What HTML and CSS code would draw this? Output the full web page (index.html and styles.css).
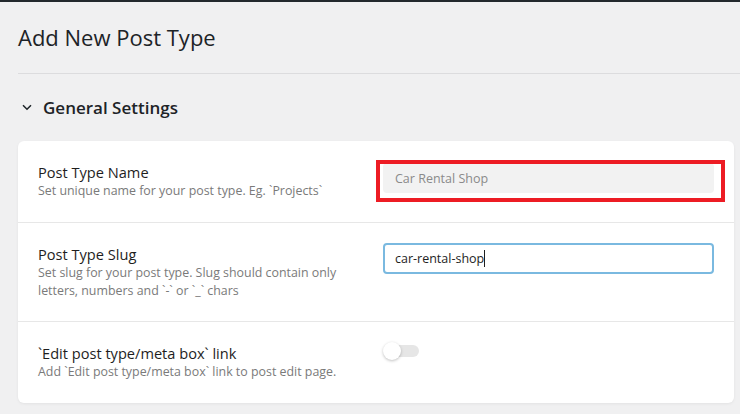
FILE: index.html
```html
<!DOCTYPE html>
<html>
<head>
<meta charset="utf-8">
<link rel="stylesheet" href="styles.css">
</head>
<body>
<div class="topbar"></div>
<main class="wrap">
  <h1 class="page-title">Add New Post Type</h1>
  <div class="section-head">
    <svg class="chev" width="10" height="7" viewBox="0 0 10 7"><polyline points="1,1.2 5,5.2 9,1.2" fill="none" stroke="#1d2327" stroke-width="1.5"/></svg>
    <span>General Settings</span>
  </div>
  <section class="card">
    <div class="row row-name">
      <div class="info">
        <div class="label">Post Type Name</div>
        <div class="desc">Set unique name for your post type. Eg. `Projects`</div>
      </div>
      <div class="control">
        <div class="input disabled">Car Rental Shop</div>
        <div class="highlight"></div>
      </div>
    </div>
    <div class="row row-slug">
      <div class="info">
        <div class="label">Post Type Slug</div>
        <div class="desc">Set slug for your post type. Slug should contain only letters, numbers and `-` or `_` chars</div>
      </div>
      <div class="control">
        <div class="input focused">car-rental-shop<span class="caret"></span></div>
      </div>
    </div>
    <div class="row row-link">
      <div class="info">
        <div class="label">`Edit post type/meta box` link</div>
        <div class="desc">Add `Edit post type/meta box` link to post edit page.</div>
      </div>
      <div class="control">
        <div class="toggle"><span class="track"></span><span class="knob"></span></div>
      </div>
    </div>
  </section>
</main>
</body>
</html>
```
FILE: styles.css
```css
* { box-sizing: border-box; }
html, body { margin: 0; padding: 0; }
body {
  background: #f0f0f1;
  font-family: "Open Sans", "Noto Sans", sans-serif;
  color: #1d2327;
  width: 740px;
  height: 414px;
  overflow: hidden;
}
.topbar { height: 2px; background: #23282d; }
.wrap { padding: 0 0 0 18px; }
.page-title {
  margin: 0;
  padding: 21px 0 0;
  height: 72px;
  font-size: 22px;
  font-weight: 400;
  line-height: 28px;
  border-bottom: 1px solid #dcdcde;
  color: #1d2327;
}
.section-head {
  display: flex;
  align-items: center;
  gap: 11px;
  height: 67px;
  padding-left: 4px;
  font-size: 17px;
  font-weight: 600;
  color: #1d2327;
}
.chev { flex: none; }
.card {
  width: 716px;
  background: #fff;
  border-radius: 6px;
  box-shadow: 0 1px 3px rgba(0,0,0,0.06);
}
.row {
  display: grid;
  grid-template-columns: 1fr 1fr;
  column-gap: 14px;
  padding: 21px 20px 22px;
  border-top: 1px solid #e7e7e7;
}
.row-name { border-top: 0; }
.row-slug { padding-bottom: 21px; }
.label {
  font-size: 14.6px;
  line-height: 20px;
  color: #1e1e1e;
}
.desc {
  font-size: 12.4px;
  line-height: 18px;
  color: #7a7a7a;
}
.control { position: relative; }
.row-name .control { padding-top: 1px; }
.row-slug .control { margin-top: -1px; }
.input {
  height: 30px;
  border-radius: 4px;
  padding: 0 12px;
  font-size: 12.5px;
  display: flex;
  align-items: center;
}
.input.disabled {
  background: #f2f2f2;
  color: #8a8a8a;
}
.highlight {
  position: absolute;
  left: -7px;
  top: -2px;
  width: 349px;
  height: 42px;
  border: 4px solid #ed1c24;
}
.input.focused {
  border: 2px solid #7ab9e0;
  height: 31px;
  padding: 0 10px;
  color: #1e1e1e;
}
.caret { display: inline-block; width: 1px; height: 17px; background: #1e1e1e; }
.toggle { position: relative; width: 40px; height: 20px; margin-top: -2px; }
.track {
  position: absolute; left: 7px; top: 4px; width: 29px; height: 12px;
  background: #e6e6e6; border-radius: 6px;
}
.knob {
  position: absolute; left: 0; top: 1px; width: 18px; height: 18px;
  background: #fff; border-radius: 50%;
  box-shadow: 0 1px 3px rgba(0,0,0,0.25);
}
```
